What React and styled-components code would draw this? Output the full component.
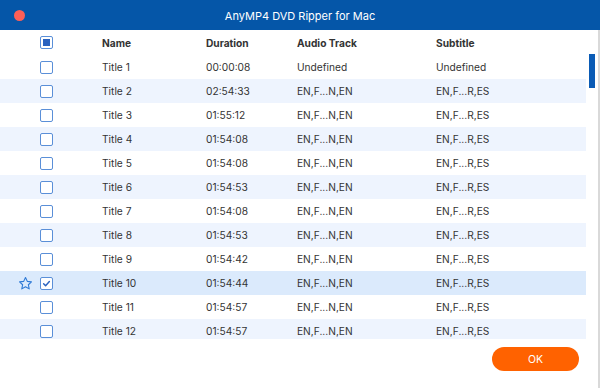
import React from 'react';
import styled, { createGlobalStyle } from 'styled-components';

const GlobalStyle = createGlobalStyle`
    html, body {
        margin: 0;
        padding: 0;
        background: #ffffff;
    }
    * {
        box-sizing: border-box;
    }
`;

const Window = styled.div`
    width: 600px;
    height: 388px;
    display: flex;
    flex-direction: column;
    background: #ffffff;
    font-family: Inter, "Liberation Sans", sans-serif;
    overflow: hidden;
`;

const TitleBar = styled.div`
    height: 30px;
    flex: none;
    background: #0556a8;
    display: flex;
    align-items: center;
    justify-content: center;
    position: relative;
    color: #ffffff;
    font-size: 11px;
    padding-top: 1px;
`;

const CloseDot = styled.span`
    position: absolute;
    left: 14px;
    top: 10px;
    width: 11px;
    height: 11px;
    border-radius: 50%;
    background: #fe5f57;
`;

const Body = styled.div`
    flex: 1;
    display: flex;
    flex-direction: column;
    border-right: 2px solid #d9d9d9;
`;

const ListArea = styled.div`
    height: 309px;
    flex: none;
    display: flex;
    overflow: hidden;
`;

const Table = styled.div`
    width: 586px;
    flex: none;
    display: flex;
    flex-direction: column;
`;

const Row = styled.div`
    height: ${p => (p.$header ? 25 : 24)}px;
    flex: none;
    display: grid;
    grid-template-columns: 40px 62px 104px 91px 139px 1fr;
    align-items: center;
    font-size: 10.2px;
    color: #333333;
    font-weight: ${p => (p.$header ? 700 : 400)};
    background: ${p => (p.$selected ? '#dbeafc' : p.$striped ? '#eef4fe' : '#ffffff')};
`;

const Cell = styled.div`
    white-space: nowrap;
`;

const StarCell = styled.div`
    display: flex;
    justify-content: flex-end;
    padding-right: 7px;
    align-items: center;
`;

const Box = styled.span`
    width: 13px;
    height: 13px;
    border: 1.5px solid #5a8fd8;
    border-radius: 2px;
    display: flex;
    align-items: center;
    justify-content: center;
    background: #ffffff;
`;

const BoxFill = styled.span`
    width: 7px;
    height: 7px;
    background: #2a62bf;
`;

const ScrollTrack = styled.div`
    flex: 1;
    position: relative;
`;

const Thumb = styled.div`
    position: absolute;
    left: 3px;
    top: 24px;
    width: 6px;
    height: 34px;
    background: #0a5bb5;
`;

const Footer = styled.div`
    flex: 1;
    display: flex;
    justify-content: flex-end;
    align-items: flex-start;
    padding: 8px 19px 0 0;
`;

const OkButton = styled.button`
    width: 87px;
    height: 24px;
    border: none;
    border-radius: 12px;
    background: #ff6200;
    color: #ffffff;
    font-family: Inter, "Liberation Sans", sans-serif;
    font-size: 10.5px;
    cursor: pointer;
`;

const rows = [
    ['Title 1', '00:00:08', 'Undefined', 'Undefined'],
    ['Title 2', '02:54:33', 'EN,F...N,EN', 'EN,F...R,ES'],
    ['Title 3', '01:55:12', 'EN,F...N,EN', 'EN,F...R,ES'],
    ['Title 4', '01:54:08', 'EN,F...N,EN', 'EN,F...R,ES'],
    ['Title 5', '01:54:08', 'EN,F...N,EN', 'EN,F...R,ES'],
    ['Title 6', '01:54:53', 'EN,F...N,EN', 'EN,F...R,ES'],
    ['Title 7', '01:54:08', 'EN,F...N,EN', 'EN,F...R,ES'],
    ['Title 8', '01:54:53', 'EN,F...N,EN', 'EN,F...R,ES'],
    ['Title 9', '01:54:42', 'EN,F...N,EN', 'EN,F...R,ES'],
    ['Title 10', '01:54:44', 'EN,F...N,EN', 'EN,F...R,ES'],
    ['Title 11', '01:54:57', 'EN,F...N,EN', 'EN,F...R,ES'],
    ['Title 12', '01:54:57', 'EN,F...N,EN', 'EN,F...R,ES'],
];

function Star() {
    return (
        <svg width="15" height="15" viewBox="0 0 24 24" fill="none" stroke="#2f7ad6" strokeWidth="1.8" strokeLinejoin="round">
            <path d="M12 2.5l2.9 6.1 6.6.8-4.9 4.6 1.3 6.6L12 17.3l-5.9 3.3 1.3-6.6-4.9-4.6 6.6-.8z" />
        </svg>
    );
}

function Check() {
    return (
        <svg width="9" height="9" viewBox="0 0 10 10" fill="none" stroke="#2a62bf" strokeWidth="1.6" strokeLinecap="round" strokeLinejoin="round">
            <path d="M1.8 5.2l2.2 2.2 4.2-4.6" />
        </svg>
    );
}

export default function App() {
    return (
        <>
            <GlobalStyle />
            <Window>
                <TitleBar>
                    <CloseDot />
                    AnyMP4 DVD Ripper for Mac
                </TitleBar>
                <Body>
                    <ListArea>
                        <Table>
                            <Row $header>
                                <Cell />
                                <Cell><Box><BoxFill /></Box></Cell>
                                <Cell>Name</Cell>
                                <Cell>Duration</Cell>
                                <Cell>Audio Track</Cell>
                                <Cell>Subtitle</Cell>
                            </Row>
                            {rows.map((r, i) => {
                                const selected = r[0] === 'Title 10';
                                return (
                                    <Row key={r[0]} $striped={i % 2 === 1} $selected={selected}>
                                        <StarCell>{selected && <Star />}</StarCell>
                                        <Cell><Box>{selected && <Check />}</Box></Cell>
                                        <Cell>{r[0]}</Cell>
                                        <Cell>{r[1]}</Cell>
                                        <Cell>{r[2]}</Cell>
                                        <Cell>{r[3]}</Cell>
                                    </Row>
                                );
                            })}
                        </Table>
                        <ScrollTrack>
                            <Thumb />
                        </ScrollTrack>
                    </ListArea>
                    <Footer>
                        <OkButton>OK</OkButton>
                    </Footer>
                </Body>
            </Window>
        </>
    );
}
